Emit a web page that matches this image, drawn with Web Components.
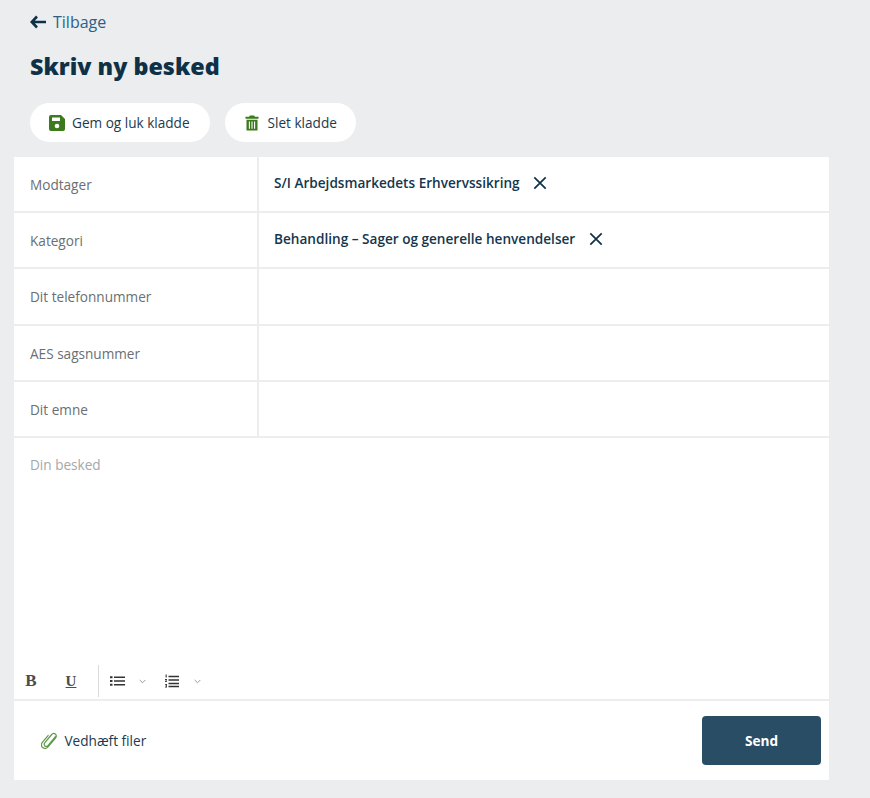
<!DOCTYPE html>
<html lang="da"><head><meta charset="utf-8"><title>Skriv ny besked</title>
<style>
html,body{margin:0;padding:0;background:#ebedef;}
body{font-family:"Open Sans",sans-serif;color:#0f3148;}
</style></head><body>
<template id="t-page"><style>
:host{display:flex;flex-direction:column;width:815px;height:798px;padding-left:14px}
.head{display:flex;flex-direction:column;padding-left:16px}
.actions{display:flex;gap:15px;margin-top:15px;margin-bottom:15px}
</style>
<div class="head"><slot name="back"></slot><slot name="title"></slot><div class="actions"><slot name="actions"></slot></div></div>
<slot></slot></template>

<template id="t-back"><style>
:host{display:flex;align-items:center;gap:7px;height:44px;font-size:16px;color:#2f5f88}
svg{width:16px;height:14px;display:block}
</style><svg viewBox="0 0 16 14"><path d="M7 1.5 1.8 7 7 12.5M2 7h14" fill="none" stroke="#0f3148" stroke-width="2.6"/></svg><span><slot></slot></span></template>

<template id="t-title"><style>
:host{display:block;margin:0}
h1{margin:0;font-size:23.3px;line-height:44px;font-weight:800;color:#0f3148}
</style><h1><slot></slot></h1></template>

<template id="t-pill"><style>
:host{display:inline-flex;align-items:center;gap:var(--pill-gap,7px);height:39px;padding:0 var(--pill-end,20px) 0 19px;background:#fff;border-radius:20px;font-size:13.6px;color:#1b3a4e;box-sizing:border-box}
::slotted(svg){width:16px;height:16px;display:block}
</style><slot name="icon"></slot><span><slot></slot></span></template>

<template id="t-form"><style>
:host{display:flex;flex-direction:column;width:815px;height:623px;background:#fff}
</style><slot></slot></template>

<template id="t-row"><style>
:host{display:grid;grid-template-columns:245px 1fr;height:56.2px;box-sizing:border-box;border-bottom:2px solid #ebedef;font-size:13.6px}
.l{display:flex;align-items:center;padding-left:16px;color:#696f73;border-right:2px solid #ebedef;padding-top:1px}
.v{display:flex;align-items:center;padding-left:15px;padding-bottom:3px}
</style><div class="l"><slot name="label"></slot></div><div class="v"><slot></slot></div></template>

<template id="t-chip"><style>
:host{display:inline-flex;align-items:center;gap:13.5px;font-size:13.6px;font-weight:600;color:#14364d}
svg{width:14px;height:14px;display:block}
</style><span><slot></slot></span><svg viewBox="0 0 14 14"><path d="M1.3 1.3 12.7 12.7M12.7 1.3 1.3 12.7" fill="none" stroke="#0f3148" stroke-width="1.7"/></svg></template>

<template id="t-editor"><style>
:host{display:flex;flex-direction:column;flex:1;min-height:0;box-sizing:border-box;border-bottom:2px solid #ebedef;margin-top:-1px}
.area{flex:1;padding:18px 16px 0;font-size:13.6px;line-height:20px;color:#a5a8aa}
.tools{display:flex;align-items:center;height:34px;margin-bottom:1px;color:#4c4c4c}
.b{font:700 17px "Liberation Serif",serif;width:34px;text-align:center}
.u{font:700 15px "Liberation Serif",serif;text-decoration:underline;width:46px;text-align:center}
.sep{width:1px;height:32px;background:#d8dadc;margin:0 11px 0 4px}
.tools svg{display:block}
.car{margin:0 19px 0 14px}
.car2{margin:0 0 0 15px}
</style><div class="area"><slot></slot></div>
<div class="tools"><span class="b">B</span><span class="u">U</span><span class="sep"></span>
<svg width="15" height="12" viewBox="0 0 15 12" fill="#333"><path d="M0 1.200h2.500v2H0zM0 5h2.500v2H0zM0 8.800h2.500v2H0zM4 1.500h11v1.400H4zM4 5.300h11v1.400H4zM4 9.100h11v1.400H4z"/></svg>
<svg class="car" width="7" height="5" viewBox="0 0 7 5"><path d="M.7 1 3.500 3.800 6.300 1" fill="none" stroke="#999" stroke-width="1"/></svg>
<svg width="14" height="14" viewBox="0 0 14 14" fill="#333"><path d="M3.500 1.800h10.500v1.400H3.500zM3.500 5.300h10.500v1.400H3.500zM3.500 8.800h10.500v1.400H3.500zM3.500 11.800h10.500v1.400H3.500zM.6.400h1.100v3.200H.6zM0 5h2v1L1 7.200h1.100v.8H0v-.8L1.100 6H0zM0 10h2v3.600H0v-.8h1.200v-.6H.4v-.6h.8v-.8H0z"/></svg>
<svg class="car2" width="7" height="5" viewBox="0 0 7 5"><path d="M.7 1 3.500 3.800 6.300 1" fill="none" stroke="#999" stroke-width="1"/></svg>
</div></template>

<template id="t-footer"><style>
:host{display:flex;align-items:center;justify-content:space-between;height:79px;box-sizing:border-box;padding:0 8px 0 27px}
.att{display:flex;align-items:center;gap:6.500px;font-size:13.6px;color:#1b3a4e}
svg{width:17px;height:18px;display:block}
</style><div class="att"><svg viewBox="0 0 18 18"><path d="M15.300 4.400 7.600 13.600c-1 1.200-2.500 1.400-3.500.6s-1-2.300 0-3.500l7-8.300c1.200-1.400 3-1.600 4.200-.6s1.200 2.800 0 4.200l-7.600 9c-1.700 2-4.200 2.300-5.900 1s-1.900-3.800-.2-5.800l5.900-7" fill="none" stroke="#5d9a4a" stroke-width="1.300" stroke-linecap="round"/></svg><span><slot name="attach"></slot></span></div><slot></slot></template>

<template id="t-send"><style>
:host{display:flex;align-items:center;justify-content:center;width:119px;height:49px;background:#2a4d66;border-radius:4px;color:#fff;font-size:13.6px;font-weight:700}
</style><slot></slot></template>

<x-page>
<x-back slot="back">Tilbage</x-back>
<x-title slot="title">Skriv ny besked</x-title>
<x-pill slot="actions"><svg slot="icon" viewBox="0 0 16 16"><path fill="#3c7a1e" d="M2 0h10l4 4v10a2 2 0 0 1-2 2H2a2 2 0 0 1-2-2V2a2 2 0 0 1 2-2z"/><path fill="#fff" d="M3 2.500h8v3.500H3z"/><circle cx="8" cy="11" r="2.300" fill="#fff"/></svg>Gem og luk kladde</x-pill>
<x-pill slot="actions" style="--pill-gap:8px;--pill-end:19px"><svg slot="icon" viewBox="0 0 16 16"><path fill="#3c7a1e" d="M5.800 .5h4.400l.6 1.300h3.700v1.900H1.500V1.800h3.700zM2.500 4.700h11V15.500h-11z"/><path stroke="#fff" stroke-width="1.100" d="M5.400 6.500v7.300M8 6.500v7.300M10.600 6.500v7.300"/></svg>Slet kladde</x-pill>
<x-form>
<x-row><span slot="label">Modtager</span><x-chip>S/I Arbejdsmarkedets Erhvervssikring</x-chip></x-row>
<x-row><span slot="label">Kategori</span><x-chip>Behandling – Sager og generelle henvendelser</x-chip></x-row>
<x-row><span slot="label">Dit telefonnummer</span></x-row>
<x-row><span slot="label">AES sagsnummer</span></x-row>
<x-row><span slot="label">Dit emne</span></x-row>
<x-editor>Din besked</x-editor>
<x-footer><span slot="attach">Vedhæft filer</span><x-send>Send</x-send></x-footer>
</x-form>
</x-page>
<script>
for (const [tag,id] of [['x-page','t-page'],['x-back','t-back'],['x-title','t-title'],['x-pill','t-pill'],['x-form','t-form'],['x-row','t-row'],['x-chip','t-chip'],['x-editor','t-editor'],['x-footer','t-footer'],['x-send','t-send']]) {
  customElements.define(tag, class extends HTMLElement {
    constructor(){super();this.attachShadow({mode:'open'}).appendChild(document.getElementById(id).content.cloneNode(true));}
  });
}
</script>
</body></html>
